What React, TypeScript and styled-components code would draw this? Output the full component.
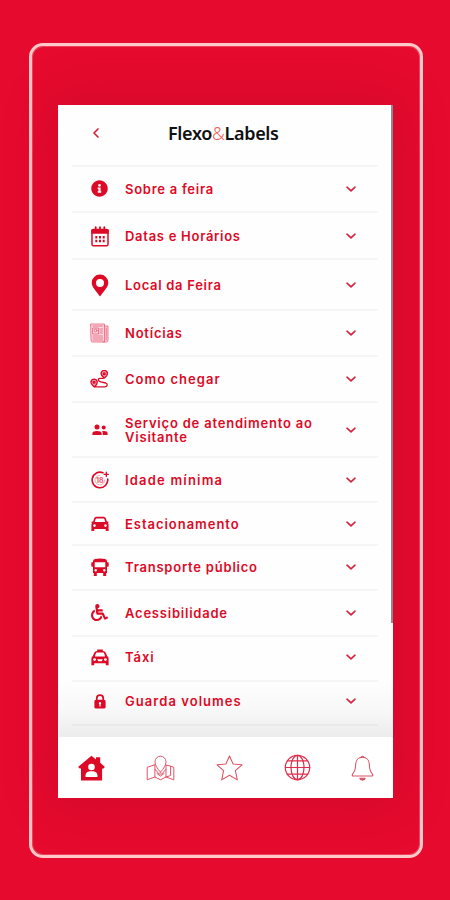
import React from 'react';
import styled, { createGlobalStyle } from 'styled-components';
import { FaInfoCircle, FaWheelchair } from 'react-icons/fa';

const RED = '#dc0a26';

const GlobalStyle = createGlobalStyle`
  * { box-sizing: border-box; }
  body { margin: 0; background: #e50a2e; }
`;

const Page = styled.main`
  width: 450px;
  height: 900px;
  padding: 43px 27px 42px 29px;
  background: #e50a2e;
  overflow: hidden;
`;

const Frame = styled.div`
  height: 815px;
  border: 3px solid #ffc9c9;
  border-radius: 14px;
  padding: 59px 27px 0 26px;
  box-shadow: inset 0 0 0 1px #f0405a;
`;

const Phone = styled.section`
  width: 335px;
  height: 693px;
  display: flex;
  flex-direction: column;
  background: #fefefe;
  box-shadow: 0 0 45px 4px rgba(165, 10, 40, 0.3);
  font-family: Inter, 'Open Sans', sans-serif;
`;

const Content = styled.div`
  flex: 1;
  padding: 0 15px 0 14px;
  background:
    linear-gradient(#8f8790, #8f8790) right top / 2px 518px no-repeat,
    linear-gradient(#eff8fb, #eff8fb) left top / 1px 632px no-repeat,
    linear-gradient(#fefefe 575px, #f8f8f8 605px, #ececec 632px);
`;

const Header = styled.header`
  height: 60px;
  display: grid;
  grid-template-columns: 96px 1fr;
  align-items: center;
  padding-bottom: 4px;
`;

const Back = styled.button`
  width: 20px;
  height: 20px;
  margin-left: 14px;
  padding: 0;
  border: 0;
  background: none;
  display: grid;
  place-items: center;
`;

const Logo = styled.h1`
  margin: 0;
  font: 600 18px/24px 'Noto Sans', sans-serif;
  letter-spacing: -0.35px;
  color: #111;
  white-space: nowrap;
`;

const Amp = styled.span`
  font-weight: 300;
  color: #f0605c;
`;

const List = styled.ul`
  list-style: none;
  margin: 0;
  padding: 0;
  border-bottom: 2px solid #e9e9e9;
`;

const Row = styled.li<{ $height: number; $lift: number }>`
  height: ${(p) => p.$height}px;
  display: grid;
  grid-template-columns: 53px 1fr 12px;
  align-items: center;
  padding: ${(p) => Math.max(-p.$lift, 0)}px 21px ${(p) => Math.max(p.$lift, 0)}px 0;
  border-top: 2px solid #f5f5f5;
`;

const IconSlot = styled.span`
  width: 55px;
  display: grid;
  place-items: center;
  color: ${RED};
`;

const Label = styled.span<{ $spacing: number }>`
  font-size: 13px;
  line-height: 14px;
  font-weight: 600;
  letter-spacing: ${(p) => p.$spacing}px;
  color: ${RED};
  white-space: pre;
`;

const Nav = styled.nav`
  height: 61px;
  display: grid;
  grid-template-columns: 66px 72px 66px 70px 61px;
  align-items: center;
  justify-items: center;
  background: #fff;
  color: ${RED};
`;

const Line = styled.svg`
  display: block;
  fill: none;
  stroke: currentColor;
  stroke-linecap: round;
  stroke-linejoin: round;
`;

const Solid = styled.svg`
  display: block;
  fill: currentColor;
  fill-rule: evenodd;
`;

const BackIcon = () => (
  <Line width="8" height="12" viewBox="0 0 8 12" color="#d81f3b" strokeWidth="1.7">
    <path d="M6 2 2 6l4 4" />
  </Line>
);

const Chevron = () => (
  <Line width="12" height="8" viewBox="0 0 12 8" color="#d4213c" strokeWidth="1.6">
    <path d="M2 2.2 6 5.8l4-3.6" />
  </Line>
);

const CalendarIcon = () => (
  <Line width="18" height="21" viewBox="0 0 18 21" strokeWidth="1.5">
    <rect x="1" y="3.6" width="16" height="16.2" rx="1.6" />
    <path d="M1 4h16v3H1z" fill="currentColor" />
    <path d="M4.7 1.2v3M9 1.2v3M13.3 1.2v3" strokeWidth="1.8" />
    <path d="M4.3 11.2h9.4M4.3 15h9.4" strokeWidth="2.5" strokeDasharray="2 1.7" strokeLinecap="butt" />
  </Line>
);

const PinIcon = () => (
  <Solid width="18" height="23" viewBox="0 0 18 23">
    <path d="M9 .5a8.2 8.2 0 0 1 8.3 8.3c0 4.2-4.2 8.2-8.3 13.7C4.9 17 .7 13 .7 8.800A8.200 8.200 0 0 1 9 .5Zm0 4.400a4 4 0 1 0 0 8 4 4 0 0 0 0-8Z" />
  </Solid>
);

const NewsIcon = () => (
  <Line width="19" height="20" viewBox="0 0 19 20" strokeWidth=".8" color="#e8607a">
    <path d="M1 1h13.5v18H2.6Q1 19 1 17.4zM14.5 3H18v14.2q0 1.8-1.7 1.800H13" fill="#fbd6df" />
    <rect x="3" y="5" width="5.5" height="6" />
    <circle cx="5.6" cy="7.5" r="1.4" />
    <path d="M3 3h9.5M10 6h2.5M10 8h2.5M10 10h2.5M3 13h9.5M3 15h9.5M3 17h9.5M16.2 5v12" />
  </Line>
);

const RouteIcon = () => (
  <Line width="19" height="18" viewBox="0 0 19 18" strokeWidth="1.3">
    <path d="M14.4 8.1C11.7 5.8 10.7 4.5 11.2 2.8a3.2 3.2 0 0 1 6.2 0c.5 1.7-.4 3.3-3 5.3Z" fill="#f49bad" />
    <circle cx="14.3" cy="3.7" r=".9" />
    <path d="M4.4 17C1.8 14.6.6 13.3 1 11.5a3.2 3.2 0 0 1 6.2 0c.4 1.8-.4 3.3-2.8 5.5Z" fill="#f49bad" />
    <circle cx="4.1" cy="12.2" r=".9" />
    <path d="M13.4 8.3H10q-2.2.2-1.4 2.1.4 1 2.1 1.4l5 1.2q1.8.6 1.5 2.2-.3 1.5-2.2 1.6H5.2" />
  </Line>
);

const PeopleIcon = () => (
  <Solid width="16" height="12" viewBox="0 0 16 12">
    <circle cx="5" cy="3" r="2.5" />
    <circle cx="11.7" cy="3.6" r="2" />
    <path d="M.4 11V9.300Q.6 6.900 5 6.900t4.600 2.400V11ZM10.700 11V9q0-1-.8-1.800 5.500-.7 5.700 2.100V11Z" />
  </Solid>
);

const Age = styled.text`
  font: 700 7px Inter, sans-serif;
  fill: #e95a70;
  stroke: none;
`;

const AgeIcon = () => (
  <Line width="18" height="18" viewBox="0 0 18 18" strokeWidth="1.6">
    <path d="M12 1.8A7.8 7.8 0 1 0 16.7 8" />
    <path d="M9 4.200A4.800 4.800 0 1 0 13.700 9" strokeWidth=".7" color="#ee8495" />
    <path d="M15.300 1.2v4.2M13.200 3.300h4.2" strokeWidth="1.3" />
    <Age x="5" y="11.6">18</Age>
  </Line>
);

const CarIcon = () => (
  <Solid width="18" height="16" viewBox="0 0 18 16">
    <path d="M5.300.8h7.400q1.500.1 2.100 1.500l1.100 3.100h1.300q.8.8-.2 1.600.6.700.6 1.700v6.200h-2.900v-2H3.300v2H.4V8.700Q.4 7.700 1 7 0 6.200.8 5.400h1.300l1.100-3.100Q3.800.9 5.300.8Zm0 1.700q-.4 0-.6.5L3.700 6h10.600l-1-3q-.2-.5-.6-.5ZM3.500 8.300a1.300 1.300 0 1 0 0 2.600 1.300 1.300 0 0 0 0-2.600Zm11 0a1.300 1.300 0 1 0 0 2.600 1.300 1.300 0 0 0 0-2.600Z" />
  </Solid>
);

const BusIcon = () => (
  <Solid width="18" height="19" viewBox="0 0 18 19">
    <path d="M4 .9Q9-.1 14 .9q1.900.4 2 2.300v1h1.100q.6 0 .6.700v3q0 .8-1 .8H16v6.200h-.8V18h-3v-3H5.800v3h-3v-3.100H2V8.700h-.7q-1 0-1-.8v-3q0-.7.6-.7H2v-1Q2.100 1.300 4 .9Zm-.3 3.300v5.100h10.600V4.200Zm1 6.800a1.200 1.200 0 1 0 0 2.400 1.200 1.200 0 0 0 0-2.400Zm8.600 0a1.200 1.200 0 1 0 0 2.400 1.200 1.200 0 0 0 0-2.400Z" />
  </Solid>
);

const TaxiIcon = () => (
  <Solid width="18" height="17" viewBox="0 0 18 17">
    <path d="M6.200.5h5.600v1.400q2.300.1 3 1.800l1.300 3.400q1.500.8 1.500 2.300v6.900h-2.800v-2H3.200v2H.4V9.400q0-1.500 1.500-2.300l1.300-3.400q.7-1.700 3-1.800Zm-.4 3.100q-.6 0-.9.700L3.900 7.400h10.200l-1-3.100q-.3-.7-.9-.7ZM3.600 9.200a1.400 1.400 0 1 0 0 2.800 1.400 1.400 0 0 0 0-2.800Zm10.800 0a1.400 1.400 0 1 0 0 2.800 1.400 1.400 0 0 0 0-2.800ZM6.200 10.200l1 2h3.600l1-2Z" />
  </Solid>
);

const LockIcon = () => (
  <Solid width="12" height="15" viewBox="0 0 12 15">
    <path d="M1.900 5.800V4.400a4.100 4.100 0 0 1 8.200 0v1.400q1.500.1 1.500 1.500v5.700q0 1.500-1.500 1.500H1.900Q.4 14.500.4 13V7.300q0-1.400 1.500-1.500Zm1.700 0h4.800V4.400a2.400 2.400 0 0 0-4.800 0ZM6 8.100a1.300 1.300 0 0 0-.6 2.400v1.900h1.200v-1.900A1.300 1.300 0 0 0 6 8.100Z" />
  </Solid>
);

const HouseIcon = () => (
  <svg width="27" height="26" viewBox="0 0 27 26">
    <path
      d="M13.5.8 18 4.4V2.2h4.2v5.6l4.5 3.9q-.4 2.2-2.6 1.9v11.9H3V13.6q-2.3.2-2.7-1.9Z"
      fill={RED}
    />
    <circle cx="13.5" cy="12" r="3.3" fill="#fff" />
    <path d="M7.5 22v-1.4q.2-4.1 4.4-4.4h3.2q4.2.3 4.4 4.4V22Z" fill="#fff" />
  </svg>
);

const MapIcon = () => (
  <Line width="29" height="26" viewBox="0 0 29 26" strokeWidth="1" color="#e55568">
    <path d="M14.5 17.2C11 13.2 9 10 9 6.7a5.5 5.5 0 0 1 11 0c0 3.3-2 6.5-5.500 10.5Z" />
    <path d="M9.200 9.600 1.200 12.300v12.500l7.700-2.800 5.600 2.800 5.500-2.800 7.800 2.800V12.300l-5-1.700-3.100-.6" />
    <path d="M8.900 10v12M20 10v12M9 14.300l4.200 4.700h2.700l3.800-4.500M11 18.500l3.500 2.600 3.500-2.600M24.600 11.300v9.200l-4.500 1.500" />
  </Line>
);

const StarIcon = () => (
  <Line width="27" height="26" viewBox="0 0 27 26" strokeWidth="1.05" color="#df5264">
    <path d="m13.5 1 3.6 8 8.9.8-6.6 5.9 1.9 9.2-7.8-4.7-7.8 4.7 1.9-9.2L1 9.8l8.9-.8Z" />
  </Line>
);

const GlobeIcon = () => (
  <Line width="27" height="27" viewBox="0 0 27 27" strokeWidth="1.2" color="#dd2e4b">
    <circle cx="13.5" cy="13.5" r="12.2" />
    <ellipse cx="13.5" cy="13.5" rx="6.5" ry="12.2" />
    <path d="M13.5 1.3v24.4M1.3 13.5h24.4M3.3 6.8h20.4M3.3 20.2h20.4" />
  </Line>
);

const BellIcon = () => (
  <Line width="23" height="26" viewBox="0 0 23 26" strokeWidth="1.05" color="#dc5263">
    <path d="M11.5 2.3c-4.2 0-6.7 3-6.8 6.9-.1 5.2-.7 7.1-3 9.7-.9 1.3-.5 2.1.8 2.1h18c1.3 0 1.7-.8.8-2.1-2.3-2.6-2.9-4.5-3-9.7-.1-3.9-2.6-6.9-6.8-6.9Z" />
    <path d="M10 2.2q1.5-2 3 0" />
    <path d="M8.8 23.2h5.4q-.4 2-2.7 2t-2.7-2" fill="currentColor" />
  </Line>
);

const rows = [
  { text: 'Sobre a feira', height: 46, lift: 1, spacing: 0.73, icon: <FaInfoCircle size={17} /> },
  { text: 'Datas e Horários', height: 47, lift: -1, spacing: 0.72, icon: <CalendarIcon /> },
  { text: 'Local da Feira', height: 51, lift: -1, spacing: 0.7, icon: <PinIcon /> },
  { text: 'Notícias', height: 46, lift: 1, spacing: 0.78, icon: <NewsIcon /> },
  { text: 'Como chegar', height: 46, lift: 1, spacing: 1.02, icon: <RouteIcon /> },
  { text: 'Serviço de atendimento ao\nVisitante', height: 55, lift: -1, spacing: 0.8, icon: <PeopleIcon /> },
  { text: 'Idade mínima', height: 45, lift: -1, spacing: 1.2, icon: <AgeIcon /> },
  { text: 'Estacionamento', height: 43, lift: -1, spacing: 0.96, icon: <CarIcon /> },
  { text: 'Transporte público', height: 45, lift: 1, spacing: 0.78, icon: <BusIcon /> },
  { text: 'Acessibilidade', height: 46, lift: 1, spacing: 0.78, icon: <FaWheelchair size={17} /> },
  { text: 'Táxi', height: 45, lift: 3, spacing: 0.95, icon: <TaxiIcon /> },
  { text: 'Guarda volumes', height: 44, lift: 4, spacing: 1.05, icon: <LockIcon /> },
];

export default function App() {
  return (
    <>
      <GlobalStyle />
      <Page>
        <Frame>
          <Phone>
            <Content>
              <Header>
                <Back aria-label="Voltar"><BackIcon /></Back>
                <Logo>Flexo<Amp>&amp;</Amp>Labels</Logo>
              </Header>
              <List>
                {rows.map((r) => (
                  <Row key={r.text} $height={r.height} $lift={r.lift}>
                    <IconSlot>{r.icon}</IconSlot>
                    <Label $spacing={r.spacing}>{r.text}</Label>
                    <Chevron />
                  </Row>
                ))}
              </List>
            </Content>
            <Nav>
              <HouseIcon />
              <MapIcon />
              <StarIcon />
              <GlobeIcon />
              <BellIcon />
            </Nav>
          </Phone>
        </Frame>
      </Page>
    </>
  );
}
